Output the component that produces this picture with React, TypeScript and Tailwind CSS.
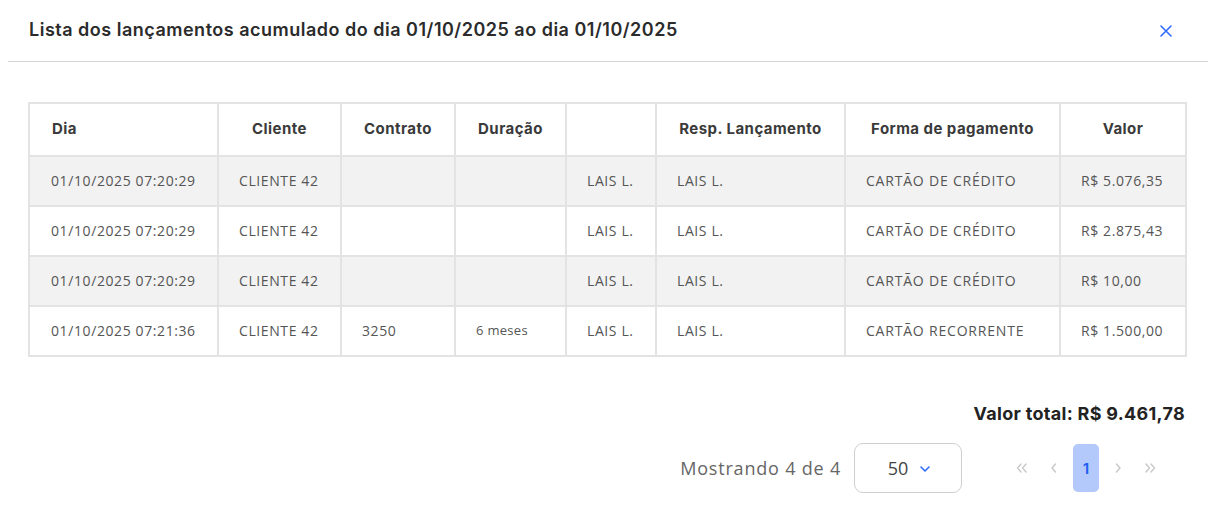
import React from 'react';

const rows = [
  { dia: '01/10/2025 07:20:29', cliente: 'CLIENTE 42', contrato: '', duracao: '', resp1: 'LAIS L.', resp: 'LAIS L.', forma: 'CARTÃO DE CRÉDITO', valor: 'R$ 5.076,35' },
  { dia: '01/10/2025 07:20:29', cliente: 'CLIENTE 42', contrato: '', duracao: '', resp1: 'LAIS L.', resp: 'LAIS L.', forma: 'CARTÃO DE CRÉDITO', valor: 'R$ 2.875,43' },
  { dia: '01/10/2025 07:20:29', cliente: 'CLIENTE 42', contrato: '', duracao: '', resp1: 'LAIS L.', resp: 'LAIS L.', forma: 'CARTÃO DE CRÉDITO', valor: 'R$ 10,00' },
  { dia: '01/10/2025 07:21:36', cliente: 'CLIENTE 42', contrato: '3250', duracao: '6 meses', resp1: 'LAIS L.', resp: 'LAIS L.', forma: 'CARTÃO RECORRENTE', valor: 'R$ 1.500,00' },
];

const heading = "font-['Inter',sans-serif]";
const body = "font-['Open_Sans',sans-serif]";

export default function App() {
  return (
    <div className="w-[1216px] h-[507px] bg-white text-[#333]">
      {/* header */}
      <div className="mx-2 h-[62px] flex items-center justify-between border-b border-[#d4d4d4] pl-[21px] pr-[35px]">
        <h2 className={`${heading} text-[18px] font-semibold text-[#2b2b2b] tracking-[0.5px] -mt-[2px]`}>
          Lista dos lançamentos acumulado do dia 01/10/2025 ao dia 01/10/2025
        </h2>
        <svg width="14" height="14" viewBox="0 0 14 14" className="mt-[1px]">
          <path d="M2 2 L12 12 M12 2 L2 12" stroke="#2f6bff" strokeWidth="1.6" strokeLinecap="round" />
        </svg>
      </div>

      {/* table */}
      <div className="mt-10 ml-[28px] w-[1157px]">
        <table className="w-full border-collapse border-2 border-[#e3e3e3] table-fixed">
          <colgroup>
            <col className="w-[189px]" />
            <col className="w-[123px]" />
            <col className="w-[114px]" />
            <col className="w-[111px]" />
            <col className="w-[90px]" />
            <col className="w-[189px]" />
            <col className="w-[215px]" />
            <col className="w-[126px]" />
          </colgroup>
          <thead>
            <tr className={`${heading} h-[53px] text-[15px] font-semibold tracking-[0.45px] text-[#3a3a3a]`}>
              <th className="border-2 border-[#e3e3e3] text-left pl-[22px]">Dia</th>
              <th className="border-2 border-[#e3e3e3] text-center">Cliente</th>
              <th className="border-2 border-[#e3e3e3] text-center">Contrato</th>
              <th className="border-2 border-[#e3e3e3] text-center">Duração</th>
              <th className="border-2 border-[#e3e3e3]"></th>
              <th className="border-2 border-[#e3e3e3] text-center">Resp. Lançamento</th>
              <th className="border-2 border-[#e3e3e3] text-center">Forma de pagamento</th>
              <th className="border-2 border-[#e3e3e3] text-center">Valor</th>
            </tr>
          </thead>
          <tbody className={`${body} text-[14px] tracking-[0.6px] text-[#555]`}>
            {rows.map((r, i) => (
              <tr key={i} className={`h-[50px] ${i % 2 === 0 ? 'bg-[#f2f2f2]' : 'bg-white'}`}>
                <td className="border-2 border-[#e3e3e3] pl-[21px] pb-[2px]">{r.dia}</td>
                <td className="border-2 border-[#e3e3e3] pl-[20px] pb-[2px]">{r.cliente}</td>
                <td className="border-2 border-[#e3e3e3] pl-[20px] pb-[2px]">{r.contrato}</td>
                <td className="border-2 border-[#e3e3e3] pl-[20px] text-[13px] tracking-[0.3px]">{r.duracao}</td>
                <td className="border-2 border-[#e3e3e3] pl-[20px] pb-[2px]">{r.resp1}</td>
                <td className="border-2 border-[#e3e3e3] pl-[20px] pb-[2px]">{r.resp}</td>
                <td className="border-2 border-[#e3e3e3] pl-[20px] pb-[2px] tracking-[0.8px]">{r.forma}</td>
                <td className="border-2 border-[#e3e3e3] pl-[20px] pb-[2px]">{r.valor}</td>
              </tr>
            ))}
          </tbody>
        </table>
      </div>

      {/* total */}
      <div className="mt-[43px] pr-[31px] flex justify-end">
        <span className={`${heading} text-[18px] font-bold tracking-[0.3px] text-[#222]`}>Valor total: R$ 9.461,78</span>
      </div>

      {/* pagination */}
      <div className="mt-[16px] pr-[53px] flex items-center justify-end">
        <span className={`${body} text-[18px] tracking-[0.8px] text-[#666]`}>Mostrando 4 de 4</span>
        <div className="ml-[13px] w-[108px] h-[50px] border border-[#cfcfcf] rounded-[9px] flex items-center justify-center gap-[12px]">
          <span className={`${body} text-[18px] text-[#444] ml-[2px]`}>50</span>
          <svg width="10" height="6" viewBox="0 0 10 6" className="mt-[2px]">
            <path d="M1 1 L5 5 L9 1" fill="none" stroke="#2f6bff" strokeWidth="1.6" strokeLinecap="round" strokeLinejoin="round" />
          </svg>
        </div>
        <div className="ml-[47px] flex items-center gap-[6px] text-[#c8c8c8]">
          <button className="w-[26px] h-[48px] flex items-center justify-center">
            <svg width="12" height="10" viewBox="0 0 12 10"><path d="M5 1 L1.5 5 L5 9 M10 1 L6.5 5 L10 9" fill="none" stroke="currentColor" strokeWidth="1.4" strokeLinecap="round" strokeLinejoin="round" /></svg>
          </button>
          <button className="w-[26px] h-[48px] flex items-center justify-center">
            <svg width="8" height="10" viewBox="0 0 8 10"><path d="M5.5 1 L2 5 L5.5 9" fill="none" stroke="currentColor" strokeWidth="1.4" strokeLinecap="round" strokeLinejoin="round" /></svg>
          </button>
          <button className={`${heading} w-[26px] h-[48px] rounded-[5px] bg-[#b4c9fb] text-[#2160f0] text-[14px] font-bold flex items-center justify-center`}>1</button>
          <button className="w-[26px] h-[48px] flex items-center justify-center">
            <svg width="8" height="10" viewBox="0 0 8 10"><path d="M2.5 1 L6 5 L2.5 9" fill="none" stroke="currentColor" strokeWidth="1.4" strokeLinecap="round" strokeLinejoin="round" /></svg>
          </button>
          <button className="w-[26px] h-[48px] flex items-center justify-center">
            <svg width="12" height="10" viewBox="0 0 12 10"><path d="M2 1 L5.5 5 L2 9 M7 1 L10.5 5 L7 9" fill="none" stroke="currentColor" strokeWidth="1.4" strokeLinecap="round" strokeLinejoin="round" /></svg>
          </button>
        </div>
      </div>
    </div>
  );
}
